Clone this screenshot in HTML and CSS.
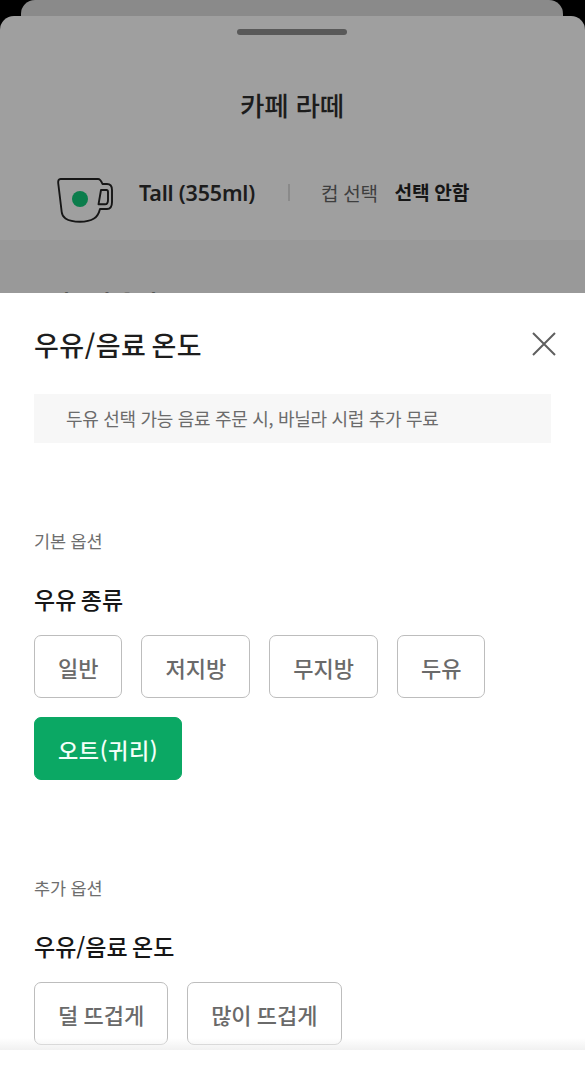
FILE: index.html
```html
<!DOCTYPE html>
<html lang="ko">
<head>
<meta charset="utf-8">
<title>카페 라떼</title>
<link rel="stylesheet" href="styles.css">
</head>
<body>
<div class="screen">
  <div class="backdrop">
    <div class="back-card"></div>
    <div class="front-card">
      <div class="front-top">
        <div class="handle"></div>
        <h1 class="drink">카페 라떼</h1>
        <div class="summary">
          <svg class="cup" width="56" height="46" viewBox="0 0 56 46" aria-hidden="true">
            <path d="M3.500 2 H41 C43.500 2 44.500 4.500 45.500 7 H50 C53.500 7 55 9.500 55 13 V25 C55 29.500 53.500 32 50 32 H43 C42 36 40.500 39.500 37 41.500 C33 44 28 44.800 23 44.800 C17 44.800 12 43.800 8.500 41.500 C6 39.800 5 37.500 4.700 35 L1.200 6 C1 3.500 1.800 2 3.500 2 Z" fill="none" stroke="#161616" stroke-width="1.900" stroke-linejoin="round"/>
            <path d="M44 13 H49.500 C50.500 13 51 14 51 15 V23 C51 25.800 50 27.300 48 27.300 H41.500 Z" fill="none" stroke="#161616" stroke-width="1.900" stroke-linejoin="round"/>
            <circle cx="23" cy="22" r="8" fill="#0b7d4c"/>
          </svg>
          <div class="summary-text">
            <span class="size">Tall (355ml)</span>
            <span class="divider"></span>
            <span class="cup-label">컵 선택</span>
            <span class="cup-value">선택 안함</span>
          </div>
        </div>
      </div>
      <div class="front-lower">
        <div class="clipped">퍼스널 옵션</div>
      </div>
    </div>
  </div>

  <div class="sheet">
    <div class="sheet-head">
      <h2 class="sheet-title">우유/음료 온도</h2>
      <svg class="close" width="26" height="26" viewBox="0 0 26 26" aria-hidden="true">
        <path d="M2 2 L24 24 M24 2 L2 24" stroke="#5f5f5f" stroke-width="2" fill="none"/>
      </svg>
    </div>
    <div class="notice">두유 선택 가능 음료 주문 시, 바닐라 시럽 추가 무료</div>

    <section class="group group-basic">
      <div class="group-label">기본 옵션</div>
      <h3 class="option-title">우유 종류</h3>
      <div class="chips">
        <button class="chip">일반</button>
        <button class="chip">저지방</button>
        <button class="chip">무지방</button>
        <button class="chip">두유</button>
        <button class="chip chip-on">오트(귀리)</button>
      </div>
    </section>

    <section class="group group-extra">
      <div class="group-label">추가 옵션</div>
      <h3 class="option-title">우유/음료 온도</h3>
      <div class="chips">
        <button class="chip">덜 뜨겁게</button>
        <button class="chip">많이 뜨겁게</button>
      </div>
    </section>
    <div class="fade"></div>
  </div>
</div>
</body>
</html>
```
FILE: styles.css
```css
* { box-sizing: border-box; margin: 0; padding: 0; }
html, body { width: 585px; height: 1072px; overflow: hidden; background: #fff; }
body { font-family: "Noto Sans CJK KR", "Noto Sans", sans-serif; }
.screen { width: 585px; height: 1072px; display: flex; flex-direction: column; overflow: hidden; position: relative; }

.backdrop { height: 293px; background: #000; flex: none; overflow: hidden; display: flex; flex-direction: column; }
.back-card { height: 16px; margin: 0 22px 0 21px; background: #8a8a8a; border-radius: 14px 14px 0 0; flex: none; }
.front-card { flex: 1; border-radius: 14px 14px 0 0; overflow: hidden; display: flex; flex-direction: column; background: #9f9f9f; }
.front-top { height: 224px; flex: none; display: flex; flex-direction: column; }
.handle { width: 110px; height: 6px; border-radius: 3px; background: #595959; margin: 13px 0 0 237px; flex: none; }
.drink { font-size: 26.500px; line-height: 36px; font-weight: 500; color: #1c1c1c; text-align: center; margin-top: 52px; padding-right: 1px; letter-spacing: -0.2px; }
.summary { display: flex; align-items: center; margin-top: 52px; padding-left: 57px; height: 50px; }
.cup { flex: none; }
.summary-text { display: flex; align-items: center; margin-bottom: 16px; margin-left: 26px; }
.size { font-family: "Noto Sans", sans-serif; font-size: 21.500px; font-weight: 600; color: #1c1c1c; width: 117px; white-space: nowrap; letter-spacing: -0.2px; }
.divider { width: 2px; height: 17px; background: #8a8a8a; margin-left: 32px; }
.cup-label { font-size: 19px; color: #3e3e3e; margin-left: 31px; letter-spacing: -0.3px; }
.cup-value { font-size: 19.200px; font-weight: 700; color: #161616; margin-left: 17px; letter-spacing: -0.3px; }
.front-lower { flex: 1; background: #999; overflow: hidden; padding: 46px 0 0 50px; }
.clipped { font-size: 22px; line-height: 30px; font-weight: 600; color: #1c1c1c; }

.sheet { flex: 1; background: #fff; padding: 0 34px; position: relative; overflow: hidden; }
.sheet-head { display: flex; justify-content: space-between; align-items: center; height: 40px; margin-top: 32px; }
.sheet-title { font-size: 27px; line-height: 40px; font-weight: 500; color: #1d1d1d; letter-spacing: 0.5px; word-spacing: -3px; }
.close { margin-right: -6px; margin-top: -2px; }
.notice { height: 49px; margin-top: 29px; width: 517px; background: #f7f7f7; padding-left: 32px; font-size: 18px; line-height: 49px; color: #6b6b6b; letter-spacing: -0.3px; }
.group-basic { margin-top: 83px; }
.group-extra { margin-top: 93px; }
.group-label { font-size: 17.500px; line-height: 30px; color: #6e6e6e; letter-spacing: -0.2px; }
.option-title { font-size: 23px; line-height: 34px; font-weight: 500; color: #161616; margin-top: 26px; letter-spacing: 0; word-spacing: -2px; }
.chips { display: flex; flex-wrap: wrap; gap: 19px; margin-top: 19px; width: 517px; }
.chip { height: 63px; padding: 0 23px; border: 1px solid #bdbdbd; border-radius: 7px; background: #fff; color: #6a6a6a; font-family: inherit; font-size: 22px; font-weight: 500; letter-spacing: 0; word-spacing: -1px; }
.chip-on { background: #0ba864; border-color: #0ba864; color: #f4fff9; letter-spacing: 0.6px; }
.fade { position: absolute; left: 0; right: 0; top: 745px; height: 12px; background: linear-gradient(to bottom, rgba(240,240,240,0), #f1f1f1); }
.fade::after { content: ""; position: absolute; left: 0; right: 0; top: 12px; height: 30px; background: #fff; }
```
